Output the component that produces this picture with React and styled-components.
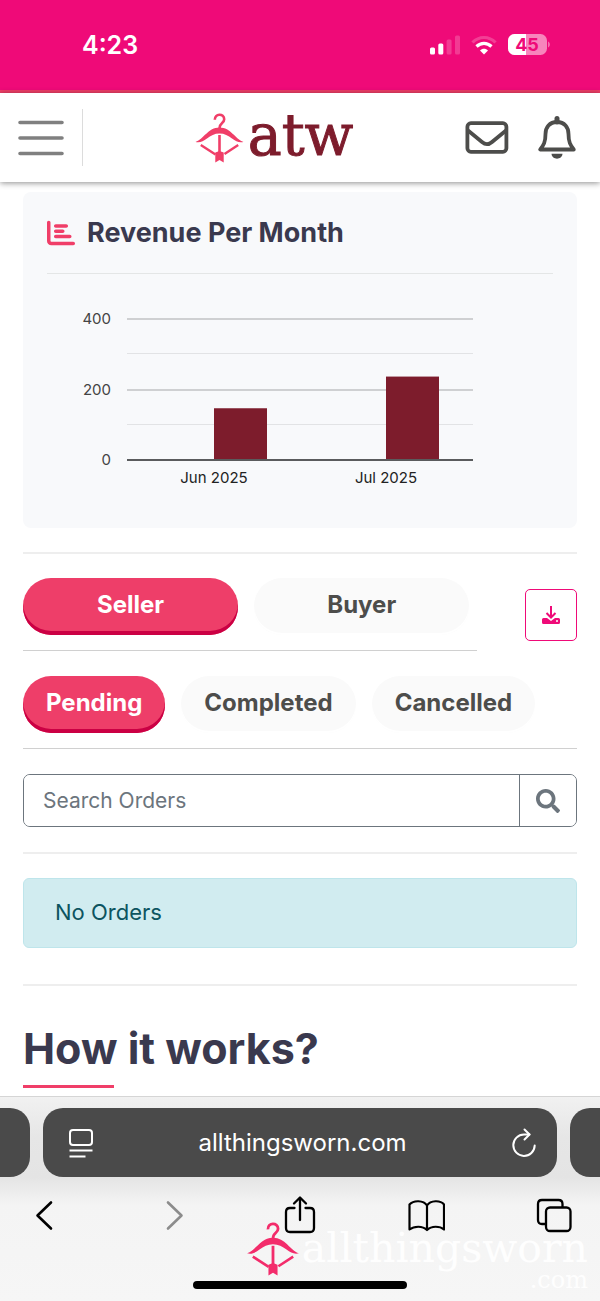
import { useState } from 'react';
import styled, { createGlobalStyle } from 'styled-components';
import { FaSearch } from 'react-icons/fa';
import { FaChartBar } from 'react-icons/fa6';

const GlobalStyle = createGlobalStyle`
  * {
    box-sizing: border-box;
  }
  body {
    margin: 0;
    background-color: #fff;
    font-family: Inter, 'Liberation Sans', sans-serif;
    color: #212529;
  }
  button, input {
    font-family: inherit;
  }
`;

const Page = styled.div`
  display: flex;
  flex-direction: column;
  min-height: 100vh;
`;

const StatusBar = styled.div`
  display: flex;
  justify-content: space-between;
  align-items: center;
  height: 93px;
  padding: 0 50px 0 82px;
  background-color: #ef0a78;
  border-bottom: 3px solid #f03e68;
`;

const Time = styled.div`
  font-size: 25px;
  font-weight: 600;
  color: #fff;
`;

const StatusIcons = styled.div`
  display: flex;
  align-items: center;
  gap: 11px;
`;

const Header = styled.header`
  display: flex;
  align-items: center;
  justify-content: space-between;
  height: 89px;
  padding: 0 24px 0 18px;
  background-color: #fff;
  box-shadow: 0 1px 6px rgba(0, 0, 0, 0.45);
`;

const HeaderSide = styled.div`
  display: flex;
  align-items: center;
  gap: ${(props) => props.$gap};
`;

const IconButton = styled.button`
  display: flex;
  align-items: center;
  justify-content: center;
  padding: 0;
  border: none;
  background: none;
  color: inherit;
`;

const Divider = styled.div`
  width: 1px;
  height: 57px;
  background-color: #dcdcdc;
`;

const Logo = styled.a`
  display: flex;
  align-items: center;
  gap: 4px;
  color: #7d1c2c;
  font-family: 'DejaVu Serif', serif;
  font-size: 57px;
  line-height: 64px;
  text-decoration: none;
`;

const LogoText = styled.span`
  padding-bottom: 5px;
  -webkit-text-stroke: 1px #7d1c2c;
`;

const Main = styled.main`
  flex: 1;
  padding: 10px 23px 8px;
`;

const Card = styled.section`
  height: 336px;
  padding: 25px 24px 0;
  border-radius: 8px;
  background-color: #f8f9fb;
`;

const CardTitle = styled.h2`
  display: flex;
  align-items: center;
  gap: 12px;
  margin: 0;
  padding-bottom: 24px;
  border-bottom: 1px solid #e4e6e6;
  color: #3a394e;
  font-size: 27px;
  font-weight: 700;
  line-height: 32px;

  svg {
    color: #f03e68;
  }
`;

const ChartBox = styled.svg`
  display: block;
  width: 100%;
  font-size: 15px;
`;

const Rule = styled.hr`
  height: 2px;
  margin: ${(props) => props.$margin};
  border: none;
  background-color: #eee;
`;

const TabsRow = styled.div`
  display: flex;
  justify-content: space-between;
  align-items: flex-start;
`;

const SideTabs = styled.div`
  flex: 0 0 82%;
`;

const StatusTabs = styled.div`
  margin: 25px 0;
`;

const Tabs = styled.div`
  display: flex;
  gap: 16px;
  padding-bottom: 15px;
  padding-right: ${(props) => (props.$wide ? '8px' : '0')};
  border-bottom: 1px solid #d0d0d0;
`;

const Tab = styled.button`
  flex: ${(props) => (props.$grow ? '1' : '0 0 auto')};
  height: 57px;
  padding: 0 23px 4px;
  border: none;
  border-radius: 28px;
  background-color: ${(props) => (props.$active ? '#ee3e69' : '#fafafa')};
  box-shadow: ${(props) => (props.$active ? 'inset 0 -4px 0 #cb0044' : 'inset 0 -2px 0 #fff')};
  color: ${(props) => (props.$active ? '#fff' : '#4d4d4b')};
  font-size: 24px;
  font-weight: 700;
`;

const DownloadButton = styled.button`
  display: flex;
  align-items: center;
  justify-content: center;
  width: 52px;
  height: 52px;
  margin-top: 11px;
  padding: 0;
  border: 1px solid #ef0a78;
  border-radius: 5px;
  background-color: #fff;
`;

const SearchBox = styled.form`
  display: flex;
  height: 53px;
  border: 1px solid #6c757d;
  border-radius: 7px;
  overflow: hidden;
`;

const SearchInput = styled.input`
  flex: 1;
  min-width: 0;
  padding: 0 19px;
  border: none;
  outline: none;
  font-size: 21px;

  &::placeholder {
    color: #6c757d;
    opacity: 1;
  }
`;

const SearchButton = styled.button`
  display: flex;
  align-items: center;
  justify-content: center;
  width: 57px;
  padding: 0;
  border: none;
  border-left: 1px solid #6c757d;
  background-color: #fff;
  color: #6c757d;
`;

const Alert = styled.div`
  padding: 17px 31px 19px;
  border: 1px solid #bee5eb;
  border-radius: 6px;
  background-color: #d1ecf0;
  color: #0c5460;
  font-size: 22px;
  line-height: 32px;
`;

const Heading = styled.h1`
  margin: 0;
  color: #3a394e;
  font-size: 43px;
  font-weight: 700;
  line-height: 52px;

  &::after {
    content: '';
    display: block;
    width: 91px;
    height: 3px;
    margin-top: 11px;
    background-color: #f03e68;
  }
`;

const Browser = styled.footer`
  position: relative;
  height: 205px;
  padding-top: 11px;
  border-top: 1px solid #d5d5d5;
  background: linear-gradient(#f1f1f1, #e6e6e6 40px, #e4e4e4 80px, #f4f4f4 108px, #f6f6f6);
  overflow: hidden;
`;

const AddressRow = styled.div`
  display: flex;
  gap: 13px;
`;

const NextPage = styled.div`
  width: 30px;
  height: 69px;
  background-color: #4a4a4a;
  border-radius: ${(props) => (props.$left ? '0 20px 20px 0' : '20px 0 0 20px')};
`;

const AddressBar = styled.div`
  display: flex;
  flex: 1;
  align-items: center;
  justify-content: space-between;
  height: 69px;
  padding: 0 20px 0 25px;
  border-radius: 20px;
  background-color: #4a4a4a;
  color: #fff;
  font-size: 24px;
`;

const Toolbar = styled.nav`
  display: flex;
  justify-content: space-between;
  padding: 18px 28px 0 26px;
  color: #000;
`;

const Watermark = styled.div`
  position: absolute;
  right: 12px;
  bottom: 9px;
  display: flex;
  align-items: flex-start;
  gap: 2px;
  color: #fefefe;
  font-family: 'DejaVu Serif', serif;
  text-align: right;
  pointer-events: none;
`;

const WatermarkName = styled.div`
  padding-top: 6px;
  font-size: 41px;
  line-height: 40px;
`;

const WatermarkEnd = styled.div`
  font-size: 24px;
  line-height: 24px;
`;

const HomeBar = styled.div`
  position: absolute;
  left: 50%;
  bottom: 12px;
  width: 214px;
  height: 8px;
  margin-left: -107px;
  border-radius: 4px;
  background-color: #000;
`;

function HangerMark({ width, height, color }) {
  return (
    <svg width={width} height={height} viewBox="0 0 49 50" fill="none" stroke={color}>
      <path d="M19.800 6.800C19.500 .2 29.200 .2 29.200 6.200c0 4.200-4.700 3.300-4.700 9" strokeWidth="2.600" />
      <path d="M.5 29C9 26 13 14.500 24.500 14.500S40 26 48.500 29c-4.500 1-7.500-.5-11.500-3.500-3.800-2.900-7.500-5-12.500-5s-8.700 2.100-12.500 5C8 28.500 5 30 .5 29z" fill={color} stroke="none" />
      <path d="M24.500 22v18" strokeWidth="2.600" />
      <path d="M5.800 32 20.500 41.500M43.200 32 29.500 41" strokeWidth="2.400" />
      <path d="M20.300 39.500l4.200-1.500 4.200 1.500V49.500l-4.200-2.500-4.200 2.500z" fill={color} stroke="none" />
    </svg>
  );
}

function SignalIcon() {
  return (
    <svg width="30" height="20" viewBox="0 0 30 20" fill="#fff">
      <rect x="0" y="12.500" width="5" height="7" rx="1.500" />
      <rect x="8.300" y="8.500" width="5" height="11" rx="1.500" />
      <rect x="16.600" y="4.500" width="5" height="15" rx="1.500" opacity="0.200" />
      <rect x="25" y="0.500" width="5" height="19" rx="1.500" opacity="0.200" />
    </svg>
  );
}

function WifiIcon() {
  return (
    <svg width="26" height="20" viewBox="0 0 26 20" fill="none" stroke="#fff" strokeWidth="3.200">
      <path d="M1.500 7.500C8 .8 18 .8 24.500 7.500" opacity="0.220" />
      <path d="M5.500 11.500c4.500-4.300 10.500-4.300 15 0" />
      <path d="M9 15.500c2.300-2.200 5.700-2.200 8 0l-4 4z" fill="#fff" stroke="none" />
    </svg>
  );
}

function BatteryIcon({ level }) {
  return (
    <svg width="42" height="22" viewBox="0 0 42 22">
      <rect width="39" height="21" rx="6.500" fill="#f785bc" />
      <path d="M6.500 0H18v21H6.500A6.500 6.500 0 0 1 0 14.500v-8A6.500 6.500 0 0 1 6.500 0z" fill="#fff" />
      <path d="M40.200 7.500c2 1 2 5 0 6z" fill="#f785bc" />
      <text x="19" y="17" textAnchor="middle" fontSize="18" fontWeight="700" fill="#ef0a78">{level}</text>
    </svg>
  );
}

const months = [
  { label: 'Jun 2025', value: 147 },
  { label: 'Jul 2025', value: 237 },
];

function RevenueChart() {
  const base = 186;
  const y = (value) => base - value * 0.352;
  return (
    <ChartBox viewBox="0 0 506 220" role="img" aria-label="Revenue per month">
      {[400, 300, 200, 100].map((tick) => (
        <rect key={tick} x="80" y={Math.round(y(tick)) - 1} width="346" height={tick % 200 ? 1 : 2} fill={tick % 200 ? '#e2e3e5' : '#cfd0d2'} />
      ))}
      {months.map((month, i) => (
        <rect key={month.label} x={167 + i * 172} y={y(month.value)} width="53" height={month.value * 0.352} fill="#7d1c2c" />
      ))}
      <rect x="80" y={base - 1} width="346" height="2" fill="#5a5b5d" />
      {[400, 200, 0].map((tick) => (
        <text key={tick} x="64" y={y(tick) + 5} textAnchor="end" fill="#444">{tick}</text>
      ))}
      {months.map((month, i) => (
        <text key={month.label} x={167 + i * 172} y="209" textAnchor="middle" fill="#222">{month.label}</text>
      ))}
    </ChartBox>
  );
}

function App() {
  const [side, setSide] = useState('Seller');
  const [status, setStatus] = useState('Pending');

  return (
    <Page>
      <GlobalStyle />
      <StatusBar>
        <Time>4:23</Time>
        <StatusIcons>
          <SignalIcon />
          <WifiIcon />
          <BatteryIcon level={45} />
        </StatusIcons>
      </StatusBar>

      <Header>
        <HeaderSide $gap="18px">
          <IconButton aria-label="Menu">
            <svg width="46" height="36" viewBox="0 0 46 36" stroke="#808080" strokeWidth="3.600" strokeLinecap="round">
              <path d="M2 2.500h42M2 18h42M2 33.500h42" />
            </svg>
          </IconButton>
          <Divider />
        </HeaderSide>
        <Logo href="#" aria-label="atw">
          <HangerMark width={49} height={50} color="#f03e68" />
          <LogoText>atw</LogoText>
        </Logo>
        <HeaderSide $gap="29px">
          <IconButton aria-label="Messages">
            <svg width="44" height="33" viewBox="0 0 44 33" fill="none" stroke="#4d4d4b" strokeWidth="3.800">
              <rect x="2.400" y="2.200" width="39" height="28.600" rx="3.500" />
              <path d="M3 9.500l14 11.500c3.500 3 6.500 3 10 0L41 9.500" />
            </svg>
          </IconButton>
          <IconButton aria-label="Notifications">
            <svg width="38" height="43" viewBox="0 0 38 43" fill="none" stroke="#4d4d4b" strokeWidth="3.800" strokeLinejoin="round">
              <path d="M19 6C11.500 6 7.500 11.500 7.500 18c0 8.500-2 11-5.300 15.500h33.600C32.500 29 30.500 26.500 30.500 18 30.500 11.500 26.500 6 19 6z" />
              <path d="M19 6V2.500" strokeWidth="5" strokeLinecap="round" />
              <path d="M13.500 37.800h11c-.6 6.500-10.400 6.500-11 0z" fill="#4d4d4b" stroke="none" />
            </svg>
          </IconButton>
        </HeaderSide>
      </Header>

      <Main>
        <Card>
          <CardTitle>
            <FaChartBar size={28} />
            Revenue Per Month
          </CardTitle>
          <RevenueChart />
        </Card>

        <Rule $margin="24px 0" />

        <TabsRow>
          <SideTabs>
            <Tabs $wide>
              {['Seller', 'Buyer'].map((name) => (
                <Tab key={name} $grow $active={side === name} onClick={() => setSide(name)}>{name}</Tab>
              ))}
            </Tabs>
          </SideTabs>
          <DownloadButton aria-label="Download orders">
            <svg width="18" height="18" viewBox="0 0 18 18" fill="none" stroke="#ef0a78" strokeWidth="2">
              <path d="M9 0v11M4.500 7 9 11.500 13.500 7" />
              <path d="M1.500 12H5l4 3 4-3h3.500q1.500 0 1.500 1.500v3q0 1.500-1.500 1.500h-15Q0 18 0 16.500v-3Q0 12 1.500 12z" fill="#ef0a78" stroke="none" />
              <circle cx="15" cy="15" r="1" fill="#fff" stroke="none" />
            </svg>
          </DownloadButton>
        </TabsRow>

        <StatusTabs>
          <Tabs>
            {['Pending', 'Completed', 'Cancelled'].map((name) => (
              <Tab key={name} $active={status === name} onClick={() => setStatus(name)}>{name}</Tab>
            ))}
          </Tabs>
        </StatusTabs>

        <SearchBox onSubmit={(e) => e.preventDefault()}>
          <SearchInput type="text" placeholder="Search Orders" aria-label="Search Orders" />
          <SearchButton type="submit" aria-label="Search">
            <FaSearch size={24} />
          </SearchButton>
        </SearchBox>

        <Rule $margin="25px 0 24px" />
        <Alert>No Orders</Alert>
        <Rule $margin="36px 0" />

        <Heading>How it works?</Heading>
      </Main>

      <Browser>
        <AddressRow>
          <NextPage $left />
          <AddressBar>
            <IconButton aria-label="Page settings">
              <svg width="26" height="30" viewBox="0 0 26 30" fill="none" stroke="#fff" strokeWidth="2">
                <rect x="2" y="2" width="22" height="15" rx="3" />
                <path d="M1.500 22.500h23M1.500 28.500h16" />
              </svg>
            </IconButton>
            <span>allthingsworn.com</span>
            <IconButton aria-label="Reload">
              <svg width="26" height="30" viewBox="0 0 26 30" fill="none" stroke="#fff" strokeWidth="2" strokeLinecap="round" strokeLinejoin="round">
                <path d="M18.500 6.500H13A10.700 10.700 0 1 0 23.700 17.500" />
                <path d="M13.500 1.500l5 5-5 5" />
              </svg>
            </IconButton>
          </AddressBar>
          <NextPage />
        </AddressRow>
        <Toolbar>
          <IconButton aria-label="Back">
            <svg width="36" height="40" viewBox="0 0 36 40" fill="none" stroke="#000" strokeWidth="2.600" strokeLinecap="round" strokeLinejoin="round">
              <path d="M25 7.500 11.500 20.500 25 33.500" />
            </svg>
          </IconButton>
          <IconButton aria-label="Forward">
            <svg width="36" height="40" viewBox="0 0 36 40" fill="none" stroke="#8c8c8c" strokeWidth="2.600" strokeLinecap="round" strokeLinejoin="round">
              <path d="M15 7.500 28.500 20.500 15 33.500" />
            </svg>
          </IconButton>
          <IconButton aria-label="Share">
            <svg width="36" height="40" viewBox="0 0 36 40" fill="none" stroke="#000" strokeWidth="2.300" strokeLinecap="round" strokeLinejoin="round">
              <path d="M14.500 13H10q-4 0-4 4v16q0 4 4 4h20q4 0 4-4V17q0-4-4-4h-4.500" />
              <path d="M20 25V3M14 8.500l6-6 6 6" />
            </svg>
          </IconButton>
          <IconButton aria-label="Bookmarks">
            <svg width="38" height="40" viewBox="0 0 38 40" fill="none" stroke="#000" strokeWidth="2.200" strokeLinejoin="round">
              <path d="M20 10.500C16.500 5 6.500 5 2.500 9.500v25C7 31 15.500 30.500 20 35c4.500-4.500 13-4 17-.5v-25C33.500 5 23.500 5 20 10.500zM20 10.500V35" />
            </svg>
          </IconButton>
          <IconButton aria-label="Tabs">
            <svg width="36" height="40" viewBox="0 0 36 40" fill="none" stroke="#000" strokeWidth="2.300">
              <path d="M10 29H6q-4 0-4-4V9q0-4 4-4h16.500q4 0 4 4v3.500" />
              <rect x="10" y="12.500" width="24.500" height="23.500" rx="4" />
            </svg>
          </IconButton>
        </Toolbar>
        <Watermark>
          <HangerMark width={54} height={54} color="#f32c6b" />
          <div>
            <WatermarkName>allthingsworn</WatermarkName>
            <WatermarkEnd>.com</WatermarkEnd>
          </div>
        </Watermark>
        <HomeBar />
      </Browser>
    </Page>
  );
}

export default App;
